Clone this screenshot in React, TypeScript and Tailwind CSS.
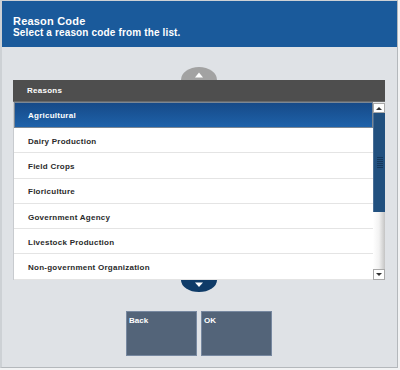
const reasons = [
  'Agricultural',
  'Dairy Production',
  'Field Crops',
  'Floriculture',
  'Government Agency',
  'Livestock Production',
  'Non-government Organization',
]

const font = { fontFamily: '"Liberation Sans", Arial, sans-serif' }

function UpArrow() {
  return (
    <svg width="36" height="13" viewBox="0 0 36 13" className="block">
      <path d="M0 13 A18 13 0 0 1 36 13 Z" fill="#a2a2a2" />
      <path d="M14 10.5 L22 10.5 L18 5.5 Z" fill="#ffffff" />
    </svg>
  )
}

function DownArrow() {
  return (
    <svg width="36" height="12" viewBox="0 0 36 12" className="block">
      <path d="M0 0 A18 12 0 0 0 36 0 Z" fill="#0f3b68" />
      <path d="M14 2.5 L22 2.5 L18 7 Z" fill="#ffffff" />
    </svg>
  )
}

function ScrollBar() {
  return (
    <div className="w-[12px] flex flex-col pt-[1px] bg-[#e4e6e8]">
      {/* up button */}
      <div className="h-[10px] bg-white border border-[#a9a9a9] flex items-center justify-center">
        <div className="w-0 h-0 border-l-[3px] border-r-[3px] border-b-[3px] border-l-transparent border-r-transparent border-b-[#333]" />
      </div>
      {/* thumb */}
      <div className="h-[99px] bg-[#21507f] border-l border-[#4a6f96] flex flex-col items-center justify-center gap-[1px]">
        {[0, 1, 2, 3, 4, 5].map(i => (
          <div key={i} className="w-[6px] h-[1px] bg-[#14375c]" />
        ))}
      </div>
      {/* track */}
      <div className="flex-1 bg-gradient-to-r from-white via-[#f2f2f2] to-[#c4c4c4]" />
      {/* down button */}
      <div className="h-[11px] bg-white border border-[#a9a9a9] flex items-center justify-center">
        <div className="w-0 h-0 border-l-[3px] border-r-[3px] border-t-[3px] border-l-transparent border-r-transparent border-t-[#333]" />
      </div>
    </div>
  )
}

export default function App() {
  return (
    <div className="w-[400px] h-[370px] bg-[#f2f3f4]" style={font}>
      <div className="w-[398px] h-[368px] flex flex-col bg-[#dfe2e6] border-l-2 border-t border-[#cdd1d5] border-r border-b border-r-[#b4b8bc] border-b-[#b4b8bc]">
        {/* header */}
        <div className="h-[46px] bg-[#1a5a9b] pl-[11px] pt-[14px] text-white font-bold">
          <div className="text-[11px] leading-[12px] tracking-[0.2px]">Reason Code</div>
          <div className="text-[10px] leading-[12px] tracking-[0.15px]">Select a reason code from the list.</div>
        </div>

        {/* list */}
        <div className="ml-[11px] w-[372px] mt-[20px] flex flex-col">
          <div className="flex justify-center">
            <UpArrow />
          </div>
          <div className="h-[22px] bg-[#4e4e4e] border-b border-[#6a6a6a] flex items-center pl-[14px] text-white text-[8px] font-bold tracking-[0.25px]">
            Reasons
          </div>
          <div className="h-[178px] flex">
            <div className="flex-1 flex flex-col bg-white border-l border-[#c8cbcf]">
              {reasons.map((r, i) =>
                i === 0 ? (
                  <div
                    key={r}
                    className="h-[26px] shrink-0 flex items-center pl-[13px] pt-[1px] text-white text-[8px] font-bold tracking-[0.25px] bg-gradient-to-b from-[#164a88] to-[#1e62aa] border border-[#7b8794]"
                  >
                    {r}
                  </div>
                ) : (
                  <div
                    key={r}
                    className="h-[25.3px] shrink-0 flex items-center pl-[14px] pt-[3px] text-[#2a2a2a] text-[8px] font-bold tracking-[0.25px] border-b border-[#e4e4e4]"
                  >
                    {r}
                  </div>
                )
              )}
            </div>
            <ScrollBar />
          </div>
          <div className="flex justify-center">
            <DownArrow />
          </div>
        </div>

        {/* buttons */}
        <div className="flex justify-center gap-[4px] mt-[19px] pr-[1px]">
          <button className="w-[71px] h-[45px] bg-[#536479] border border-[#7788a0] text-white text-[8px] font-bold text-left flex items-start pl-[2px] pt-[3px]">
            Back
          </button>
          <button className="w-[71px] h-[45px] bg-[#536479] border border-[#7788a0] text-white text-[8px] font-bold text-left flex items-start pl-[2px] pt-[3px]">
            OK
          </button>
        </div>
      </div>
    </div>
  )
}
